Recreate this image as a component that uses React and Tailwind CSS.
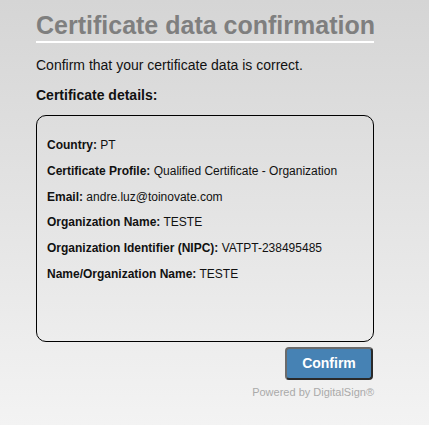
const details = [
  { label: 'Country:', value: 'PT' },
  { label: 'Certificate Profile:', value: 'Qualified Certificate - Organization' },
  { label: 'Email:', value: 'andre.luz@toinovate.com' },
  { label: 'Organization Name:', value: 'TESTE' },
  { label: 'Organization Identifier (NIPC):', value: 'VATPT-238495485' },
  { label: 'Name/Organization Name:', value: 'TESTE' },
];

export default function App() {
  return (
    <div
      className="min-h-screen bg-gradient-to-b from-[#d5d5d5] to-[#f3f3f3] pl-[36px] pt-[10px] text-[#111]"
      style={{ fontFamily: '"Liberation Sans", Arial, sans-serif' }}
    >
      <div className="w-[338px]">
        <h1 className="whitespace-nowrap text-[25px] leading-[30px] font-bold text-[#7f7f7f] border-b-2 border-white pb-[1px]">
          Certificate data confirmation
        </h1>
        <p className="mt-[14px] text-[14px] leading-[16px]">
          Confirm that your certificate data is correct.
        </p>
        <p className="mt-[14px] text-[14px] leading-[16px] font-bold">Certificate details:</p>

        <div className="mt-[12px] h-[227px] rounded-[10px] border border-black px-[10px] pt-[23px] flex flex-col gap-[12px]">
          {details.map((d) => (
            <div key={d.label} className="text-[12px] leading-[13.8px]">
              <span className="font-bold">{d.label}</span> {d.value}
            </div>
          ))}
        </div>

        <div className="flex flex-col items-end">
          <button
            type="button"
            className="mt-[5px] mr-[1px] w-[88px] h-[33px] rounded-[4px] bg-[#4682b4] text-white text-[14px] font-bold border-2 border-t-[#6b6b6b] border-l-[#6b6b6b] border-r-[#2a2a2a] border-b-[#2a2a2a]"
          >
            Confirm
          </button>
          <p className="mt-[6px] text-[11px] leading-[13px] text-[#aaaaaa]">Powered by DigitalSign®</p>
        </div>
      </div>
    </div>
  );
}
